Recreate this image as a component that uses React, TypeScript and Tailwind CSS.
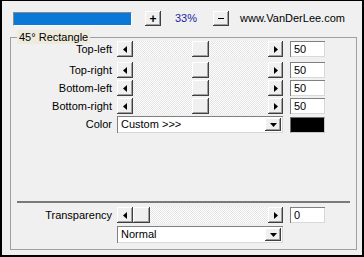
import React from 'react';

const raised =
  'bg-[#f0f0f0] shadow-[inset_-1px_-1px_#404040,inset_1px_1px_#ffffff,inset_-2px_-2px_#a0a0a0]';
const sunken = 'shadow-[inset_1px_1px_#808080,inset_-1px_-1px_#d8d8d8]';

const ArrowLeftIcon = () => (
  <svg width="4" height="7" viewBox="0 0 4 7">
    <polygon points="4,0 0,3.5 4,7" fill="#000" />
  </svg>
);

const ArrowRightIcon = () => (
  <svg width="4" height="7" viewBox="0 0 4 7">
    <polygon points="0,0 4,3.5 0,7" fill="#000" />
  </svg>
);

const ArrowDownIcon = () => (
  <svg width="7" height="4" viewBox="0 0 7 4">
    <polygon points="0,0 7,0 3.5,4" fill="#000" />
  </svg>
);

const Slider: React.FC<{ value: number }> = ({ value }) => {
  // track is 135px, thumb 17px
  const offset = Math.round((value / 100) * 118);
  return (
    <div className="flex h-[16px] w-[166px]">
      <div className={`flex w-[16px] items-center justify-center ${raised}`}>
        <ArrowLeftIcon />
      </div>
      <div className="flex flex-1 bg-[repeating-conic-gradient(#ffffff_0_25%,#e4e4e4_0_50%)] bg-[length:2px_2px]">
        <div className={`h-full w-[17px] ${raised}`} style={{ marginLeft: offset }} />
      </div>
      <div className={`flex w-[15px] items-center justify-center ${raised}`}>
        <ArrowRightIcon />
      </div>
    </div>
  );
};

const ValueBox: React.FC<{ value: string }> = ({ value }) => (
  <div className={`ml-[7px] flex h-[16px] w-[35px] items-center bg-white pl-[4px] leading-none ${sunken}`}>
    {value}
  </div>
);

const Dropdown: React.FC<{ label: string }> = ({ label }) => (
  <div className={`flex h-[17px] w-[166px] items-center bg-white pl-[4px] ${sunken}`}>
    <span className="flex-1 leading-none">{label}</span>
    <div className={`mr-[2px] flex h-[13px] w-[16px] items-center justify-center ${raised}`}>
      <ArrowDownIcon />
    </div>
  </div>
);

const SliderRow: React.FC<{ label: string; value: number; className?: string }> = ({
  label,
  value,
  className = '',
}) => (
  <div className={`flex h-[16px] items-center ${className}`}>
    <div className="w-[101px] text-right leading-none">{label}</div>
    <div className="ml-[5px]">
      <Slider value={value} />
    </div>
    <ValueBox value={String(value)} />
  </div>
);

export default function App() {
  const corners = [
    { label: 'Top-left', value: 50 },
    { label: 'Top-right', value: 50 },
    { label: 'Bottom-left', value: 50 },
    { label: 'Bottom-right', value: 50 },
  ];

  return (
    <div className="flex h-[257px] w-[364px] flex-col border-[2px] border-t-[1px] border-black bg-[#f0f0f0] font-['Liberation_Sans',Arial,sans-serif] text-[11px] text-black">
      {/* Top bar */}
      <div className="flex h-[29px] items-start pl-[11px] pt-[10px]">
        <div className="mt-[1px] h-[14px] w-[119px] border-b border-l border-r border-t border-b-white border-l-[#8a8a8a] border-r-white border-t-[#8a8a8a] bg-[#0a78d7] shadow-[inset_0_0_0_1px_#0a78d7]" />
        <div className={`ml-[13px] flex h-[15px] w-[16px] items-center justify-center text-[12px] font-bold leading-none ${raised}`}>
          +
        </div>
        <div className="ml-[14px] mt-[2px] w-[24px] leading-none text-[#1c1ca6]">33%</div>
        <div className={`ml-[14px] flex h-[15px] w-[16px] items-center justify-center ${raised}`}>
          <div className="h-[1px] w-[6px] bg-black" />
        </div>
        <div className="ml-[11px] mt-[2px] leading-none">www.VanDerLee.com</div>
      </div>

      {/* Group box */}
      <fieldset className="mb-[5px] ml-[8px] mr-[5px] flex flex-1 flex-col border border-[#a0a0a0] pb-[6px]">
        <legend className="ml-[6px] h-[14px] bg-[#efebdc] px-[2px] leading-[14px]">45° Rectangle</legend>

        <div className="-mt-[3px] flex flex-col gap-[2px]">
          {corners.map((c, i) => (
            <SliderRow
              key={c.label}
              label={c.label}
              value={c.value}
              className={i === 0 ? 'mb-[3px]' : ''}
            />
          ))}
          <div className="flex h-[17px] items-center">
            <div className="w-[101px] text-right leading-none">Color</div>
            <div className="ml-[5px]">
              <Dropdown label="Custom >>>" />
            </div>
            <div className="ml-[7px] h-[16px] w-[35px] border border-b-[#c8c8c8] border-l-[#707070] border-r-[#c8c8c8] border-t-[#707070] bg-black" />
          </div>
        </div>

        <div className="flex-1" />

        <div className="mx-[6px] h-[2px] bg-[#7a7a7a]" />

        <div className="mt-[4px] flex flex-col gap-[3px]">
          <SliderRow label="Transparency" value={0} />
          <div className="ml-[106px]">
            <Dropdown label="Normal" />
          </div>
        </div>
      </fieldset>
    </div>
  );
}
